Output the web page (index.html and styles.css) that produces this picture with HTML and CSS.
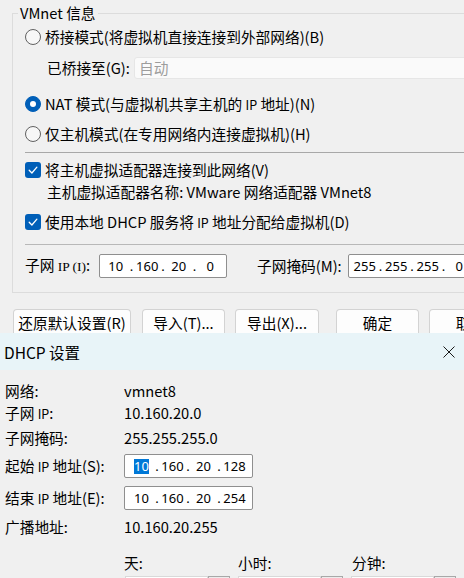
FILE: index.html
```html
<!DOCTYPE html>
<html lang="zh-CN">
<head>
<meta charset="utf-8">
<title>VMnet</title>
<link rel="stylesheet" href="styles.css">
</head>
<body>
<div class="main-win">
  <fieldset class="group">
    <legend>VMnet 信息</legend>
    <div class="row r1"><span class="radio"></span><span>桥接模式(将虚拟机直接连接到外部网络)(B)</span></div>
    <div class="row r2"><span class="lbl-bridge">已桥接至(G):</span><div class="combo">自动</div></div>
    <div class="row r3"><span class="radio on"></span><span>NAT 模式(与虚拟机共享主机的 <span class="ip">IP</span> 地址)(N)</span></div>
    <div class="row r4"><span class="radio"></span><span>仅主机模式(在专用网络内连接虚拟机)(H)</span></div>
    <div class="sep s1"></div>
    <div class="row r5"><span class="check"><svg viewBox="0 0 16 16" width="16" height="16"><path d="M4.2 8.3 L6.9 11 L11.9 5.2" fill="none" stroke="#fff" stroke-width="1.3" stroke-linecap="round" stroke-linejoin="round"/></svg></span><span>将主机虚拟适配器连接到此网络(V)</span></div>
    <div class="row r6"><span class="indent">主机虚拟适配器名称: VMware 网络适配器 VMnet8</span></div>
    <div class="row r7"><span class="check"><svg viewBox="0 0 16 16" width="16" height="16"><path d="M4.2 8.3 L6.9 11 L11.9 5.2" fill="none" stroke="#fff" stroke-width="1.3" stroke-linecap="round" stroke-linejoin="round"/></svg></span><span>使用本地 DHCP 服务将 <span class="ip">IP</span> 地址分配给虚拟机(D)</span></div>
    <div class="sep s2"></div>
    <div class="row r8">
      <span class="lbl-subnet">子网 <span class="ips">IP (I)</span>:</span>
      <div class="ipbox">
        <span class="fld">10</span><span class="dot">.</span><span class="fld">160</span><span class="dot">.</span><span class="fld">20</span><span class="dot">.</span><span class="fld">0</span>
      </div>
      <span class="lbl-mask">子网掩码(M):</span>
      <div class="ipbox">
        <span class="fld">255</span><span class="dot">.</span><span class="fld">255</span><span class="dot">.</span><span class="fld">255</span><span class="dot">.</span><span class="fld">0</span>
      </div>
    </div>
  </fieldset>
  <div class="buttons">
    <div class="btn b1">还原默认设置(R)</div>
    <div class="btn b2">导入(T)...</div>
    <div class="btn b3">导出(X)...</div>
    <div class="btn b4">确定</div>
    <div class="btn b5">取消</div>
  </div>
</div>
<div class="dhcp">
  <div class="titlebar">
    <span class="title">DHCP 设置</span>
    <svg class="close" viewBox="0 0 12 12" width="12" height="12"><path d="M0.5 0.5 L11.5 11.5 M11.5 0.5 L0.5 11.5" stroke="#1a1a1a" stroke-width="1"/></svg>
  </div>
  <div class="dbody">
    <div class="drow d1"><span class="dlbl">网络:</span><span>vmnet8</span></div>
    <div class="drow d2"><span class="dlbl">子网 <span class="ip">IP</span>:</span><span>10.160.20.0</span></div>
    <div class="drow d3"><span class="dlbl">子网掩码:</span><span>255.255.255.0</span></div>
    <div class="drow d4 tall"><span class="dlbl">起始 <span class="ip">IP</span> 地址(S):</span>
      <div class="ipbox dip">
        <span class="fld"><span class="sel">10</span></span><span class="dot">.</span><span class="fld">160</span><span class="dot">.</span><span class="fld">20</span><span class="dot">.</span><span class="fld">128</span>
      </div>
    </div>
    <div class="drow d5 tall"><span class="dlbl">结束 <span class="ip">IP</span> 地址(E):</span>
      <div class="ipbox dip">
        <span class="fld">10</span><span class="dot">.</span><span class="fld">160</span><span class="dot">.</span><span class="fld">20</span><span class="dot">.</span><span class="fld">254</span>
      </div>
    </div>
    <div class="drow d6"><span class="dlbl">广播地址:</span><span>10.160.20.255</span></div>
    <div class="drow d7"><span class="dlbl"></span><span class="tcol">天:</span><span class="tcol">小时:</span><span class="tcol">分钟:</span></div>
    <div class="spinrow">
      <div class="spin"><div class="spin-in"></div><div class="spin-btn"></div></div>
      <div class="spin"><div class="spin-in"></div><div class="spin-btn"></div></div>
      <div class="spin"><div class="spin-in"></div><div class="spin-btn"></div></div>
    </div>
  </div>
</div>
</body>
</html>
```
FILE: styles.css
```css
* { box-sizing: border-box; }
html, body { margin: 0; padding: 0; }
body {
  width: 464px;
  height: 578px;
  overflow: hidden;
  background: #f0f0f0;
  font-family: "Noto Sans CJK SC", "Noto Sans", sans-serif;
  font-size: 14.7px;
  line-height: 20px;
  color: #000;
}

.main-win {
  height: 333px;
  overflow: hidden;
}

.group {
  margin: 3px 0 0 12px;
  padding: 0 0 5px 0;
  border: 1px solid #dcdcdc;
  width: 640px;
  min-width: 0;
}
.group legend {
  margin-left: 5px;
  padding: 0 2px;
  height: 20px;
  line-height: 20px;
}

.row {
  display: flex;
  align-items: center;
  padding-left: 12px;
  white-space: nowrap;
}
.r1 { height: 28px; }
.r2 { height: 34px; }
.r3 { height: 38px; }
.r4 { height: 22px; }
.r5 { height: 22px; }
.r6 { height: 22px; }
.r7 { height: 38px; }
.r8 { height: 42px; }

.radio {
  flex: none;
  width: 16px;
  height: 16px;
  border-radius: 50%;
  border: 1px solid #616161;
  background: #f7f7f7;
  margin-right: 4px;
  position: relative;
}
.radio.on {
  background: #005fb8;
  border-color: #005fb8;
}
.radio.on::after {
  content: "";
  position: absolute;
  left: 4px;
  top: 4px;
  width: 6px;
  height: 6px;
  border-radius: 50%;
  background: #fff;
}

.check {
  flex: none;
  width: 16px;
  height: 16px;
  border-radius: 3px;
  background: #005fb8;
  margin-right: 4px;
  display: flex;
}

.ip { font-size: 12.5px; }
.ips { font-family: "Liberation Serif", serif; font-size: 13.5px; }

.lbl-bridge {
  margin-left: 22px;
  width: 87px;
}
.combo {
  flex: 1;
  height: 22px;
  background: #fafafa;
  border: 1px solid #e6e6e6;
  border-radius: 3px;
  color: #9d9d9d;
  padding-left: 4px;
  line-height: 20px;
}

.indent { margin-left: 22px; }

.sep {
  height: 1px;
  margin-left: 12px;
  background: #a8a8a8;
}
.s1 { margin-top: 7px; margin-bottom: 6px; }
.s2 { margin-top: 3px; background: #b8b8b8; }

.lbl-subnet { width: 74px; }
.lbl-mask { margin-left: 30px; width: 91px; }

.ipbox {
  flex: none;
  display: flex;
  align-items: center;
  width: 128px;
  height: 24px;
  background: #fff;
  border: 1px solid #8f8f8f;
  border-radius: 2px;
  padding-left: 4px;
  font-family: "Noto Sans", "DejaVu Sans", sans-serif;
  font-size: 13px;
  color: #000;
}
.fld {
  width: 23.5px;
  text-align: center;
}
.dot {
  width: 8px;
  text-align: center;
}

.buttons {
  display: flex;
  margin: 16px 0 0 13px;
}
.btn {
  flex: none;
  height: 28px;
  background: #fdfdfd;
  border: 1px solid #d3d3d3;
  border-bottom-color: #bdbdbd;
  border-radius: 4px;
  display: flex;
  align-items: center;
  justify-content: center;
  white-space: nowrap;
}
.b1 { width: 118px; }
.b2 { width: 83px; margin-left: 11px; }
.b3 { width: 84px; margin-left: 10px; }
.b4 { width: 83px; margin-left: 17px; }
.b5 { width: 83px; margin-left: 10px; }

.titlebar {
  height: 37px;
  background: #e8f4f8;
  display: flex;
  align-items: center;
  padding-left: 4px;
}
.title { font-size: 15.5px; }
.close {
  margin-left: auto;
  margin-right: 9px;
}

.dbody { padding: 10px 0 0 5px; }
.drow {
  display: flex;
  align-items: center;
  height: 22px;
  white-space: nowrap;
}
.drow.tall { height: 24px; }
.dlbl { width: 119px; flex: none; }
.d3 { margin-top: 3px; }
.d4 { margin-top: 5px; }
.d5 { margin-top: 8px; }
.d6 { margin-top: 6px; }
.d7 { margin-top: 14px; }
.tcol { width: 114px; flex: none; }

.dip {
  width: 129px;
  padding-left: 5px;
}
.dip .fld { width: 23px; }
.sel {
  background: #0078d7;
  color: #fff;
  display: inline-block;
  line-height: 15px;
  padding: 0 0.5px;
}

.spinrow {
  display: flex;
  margin-top: 2px;
  padding-left: 120px;
}
.spin {
  display: flex;
  width: 106px;
  height: 24px;
  margin-right: 8px;
}
.spin-in {
  flex: 1;
  background: #fff;
  border: 1px solid #d9d9d9;
}
.spin-btn {
  width: 22px;
  background: #ececec;
  border: 1px solid #a8a8a8;
}
```
